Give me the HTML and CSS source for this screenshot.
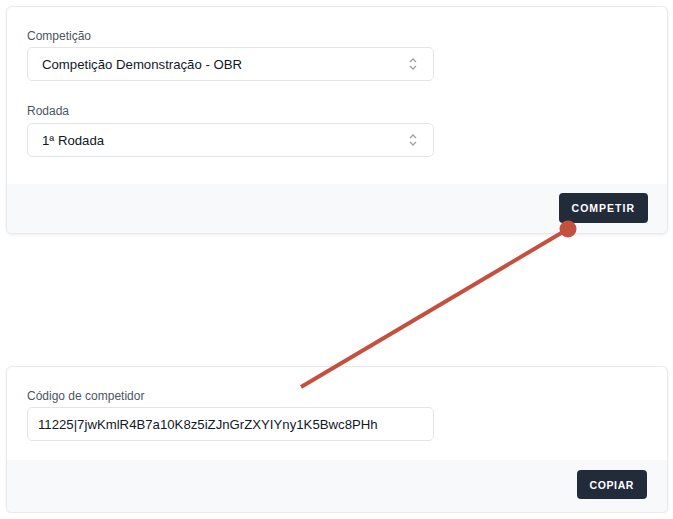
FILE: index.html
```html
<!DOCTYPE html>
<html lang="pt-BR">
<head>
<meta charset="utf-8">
<title>Competir</title>
<link rel="stylesheet" href="styles.css">
</head>
<body>
<div id="main">

<div class="card card-top">
 <div class="content">
  <label class="field-label" for="comp">Competição</label>
  <div class="select">
   <span>Competição Demonstração - OBR</span>
   <svg class="arrows" width="10" height="14" viewBox="0 0 10 14"><path d="M2 5 L5 2 L8 5 M2 9 L5 12 L8 9" fill="none" stroke="#9ca3af" stroke-width="1.3"/></svg>
  </div>
  <label class="field-label second" for="rod">Rodada</label>
  <div class="select">
   <span>1ª Rodada</span>
   <svg class="arrows" width="10" height="14" viewBox="0 0 10 14"><path d="M2 5 L5 2 L8 5 M2 9 L5 12 L8 9" fill="none" stroke="#9ca3af" stroke-width="1.3"/></svg>
  </div>
 </div>
 <div class="footer">
  <button class="btn">Competir</button>
 </div>
</div>

<div class="card card-bottom">
 <div class="content">
  <label class="field-label" for="code">Código de competidor</label>
  <div class="input">11225|7jwKmlR4B7a10K8z5iZJnGrZXYIYny1K5Bwc8PHh</div>
 </div>
 <div class="footer">
  <button class="btn">Copiar</button>
 </div>
</div>

</div>

<!-- seta ligando o botão ao código -->
<svg class="pointer" width="673" height="519" viewBox="0 0 673 519">
 <line x1="568" y1="229" x2="301" y2="387" stroke="#c4513d" stroke-width="4"/>
 <circle cx="568" cy="229" r="8.5" fill="#c4513d"/>
</svg>
</body>
</html>
```

FILE: styles.css
```css
body{
	margin:0;
	background:#fff;
	font-family:"Liberation Sans", Arial, sans-serif;
	color:#111827;
}

#main{
	padding:6px 5px 0 6px;
}

.card{
	border:1px solid #e8eaee;
	border-radius:6px;
	box-shadow:0 1px 3px rgba(0,0,0,0.08);
	background:#fff;
	overflow:hidden;
}

.card-top{
	height:226px;
}

.card-bottom{
	margin-top:132px;
	height:145px;
}

.content{
	padding:21px 20px 0 20px;
}

.card-top .content{
	height:156px;
}

.card-bottom .content{
	height:72px;
	padding-top:21px;
}

.field-label{
	display:block;
	font-size:12px;
	line-height:16px;
	color:#4b5563;
	margin-bottom:3px;
}

.field-label.second{
	margin-top:22px;
	margin-bottom:4px;
}

.select, .input{
	box-sizing:border-box;
	width:407px;
	height:34px;
	border:1px solid #e2e5ea;
	border-radius:5px;
	font-size:13.2px;
	display:flex;
	align-items:center;
}

.select{
	padding:0 15px 0 14px;
	justify-content:space-between;
}

.input{
	padding:0 10px;
}

.footer{
	background:#f7f9fb;
	display:flex;
	justify-content:flex-end;
	padding:9px 19px 0 0;
	height:100%;
}

.card-bottom .footer{
	padding-top:10px;
	padding-right:20px;
}

.btn{
	background:#222b3a;
	color:#fff;
	border:0;
	border-radius:4px;
	font-family:"Liberation Sans", Arial, sans-serif;
	font-weight:bold;
	font-size:10.5px;
	letter-spacing:1px;
	text-transform:uppercase;
	height:30px;
	padding:0 13px;
}

.card-bottom .btn{
	height:29px;
	padding:0 13px;
	letter-spacing:0.6px;
}

.pointer{
	position:absolute;
	left:0;
	top:0;
	pointer-events:none;
}
```
